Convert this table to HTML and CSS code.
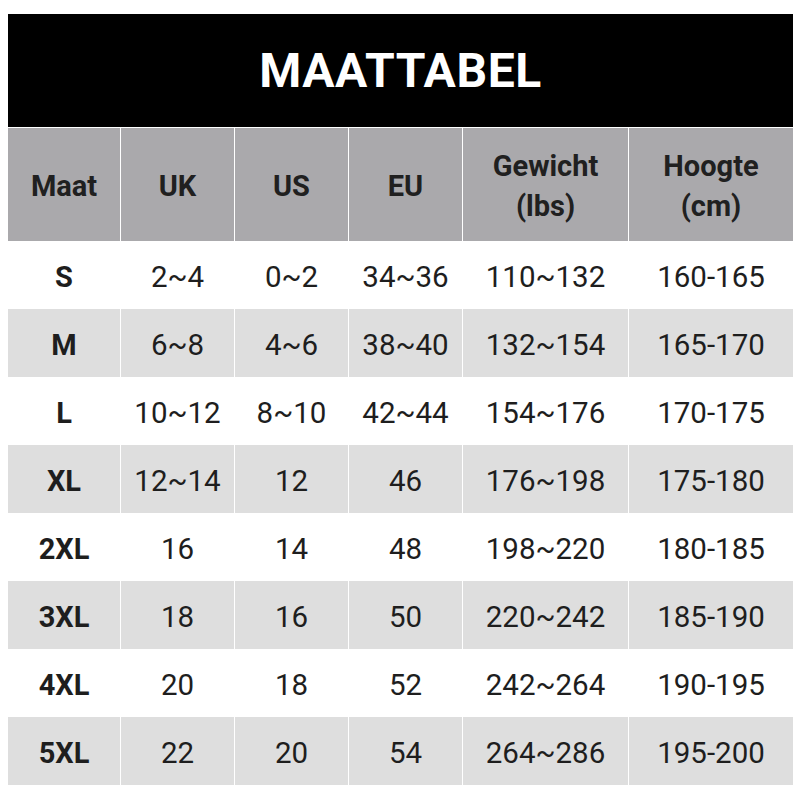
FILE: index.html
```html
<!DOCTYPE html>
<html lang="nl">
<head>
<meta charset="utf-8">
<title>Maattabel</title>
<link rel="stylesheet" href="styles.css">
</head>
<body>
<div class="chart">
  <div class="title">MAATTABEL</div>
  <div class="grid">
    <div class="cell head">Maat</div>
    <div class="cell head">UK</div>
    <div class="cell head">US</div>
    <div class="cell head">EU</div>
    <div class="cell head">Gewicht<br>(lbs)</div>
    <div class="cell head">Hoogte<br>(cm)</div>

    <div class="cell size">S</div><div class="cell">2~4</div><div class="cell">0~2</div><div class="cell">34~36</div><div class="cell">110~132</div><div class="cell">160-165</div>
    <div class="cell size alt">M</div><div class="cell alt">6~8</div><div class="cell alt">4~6</div><div class="cell alt">38~40</div><div class="cell alt">132~154</div><div class="cell alt">165-170</div>
    <div class="cell size">L</div><div class="cell">10~12</div><div class="cell">8~10</div><div class="cell">42~44</div><div class="cell">154~176</div><div class="cell">170-175</div>
    <div class="cell size alt">XL</div><div class="cell alt">12~14</div><div class="cell alt">12</div><div class="cell alt">46</div><div class="cell alt">176~198</div><div class="cell alt">175-180</div>
    <div class="cell size">2XL</div><div class="cell">16</div><div class="cell">14</div><div class="cell">48</div><div class="cell">198~220</div><div class="cell">180-185</div>
    <div class="cell size alt">3XL</div><div class="cell alt">18</div><div class="cell alt">16</div><div class="cell alt">50</div><div class="cell alt">220~242</div><div class="cell alt">185-190</div>
    <div class="cell size">4XL</div><div class="cell">20</div><div class="cell">18</div><div class="cell">52</div><div class="cell">242~264</div><div class="cell">190-195</div>
    <div class="cell size alt">5XL</div><div class="cell alt">22</div><div class="cell alt">20</div><div class="cell alt">54</div><div class="cell alt">264~286</div><div class="cell alt">195-200</div>
  </div>
</div>
</body>
</html>
```
FILE: styles.css
```css
html, body {
  margin: 0;
  padding: 0;
  background: #ffffff;
}
body {
  font-family: Roboto, "Liberation Sans", sans-serif;
  color: #1c1c1c;
}
.chart {
  width: 785px;
  margin: 14px 0 0 8px;
}
.title {
  height: 113px;
  background: #000000;
  color: #ffffff;
  font-weight: 700;
  font-size: 48px;
  display: flex;
  align-items: center;
  justify-content: center;
  letter-spacing: 0.6px;
}
.grid {
  display: grid;
  grid-template-columns: 112px 113px 113px 113px 165px 1fr;
  grid-template-rows: 113px repeat(8, 68px);
  column-gap: 1px;
  margin-top: 1px;
  background: #ffffff;
}
.cell {
  display: flex;
  align-items: center;
  justify-content: center;
  text-align: center;
  font-size: 29.5px;
  font-weight: 400;
  padding-top: 3px;
  background: #ffffff;
  color: #1e1e1e;
}
.head {
  background: #aaa9ac;
  font-weight: 700;
  font-size: 29px;
  line-height: 40px;
  padding-top: 2px;
  color: #202020;
}
.size {
  font-weight: 700;
  font-size: 29px;
}
.alt {
  background: #dedede;
}
```
